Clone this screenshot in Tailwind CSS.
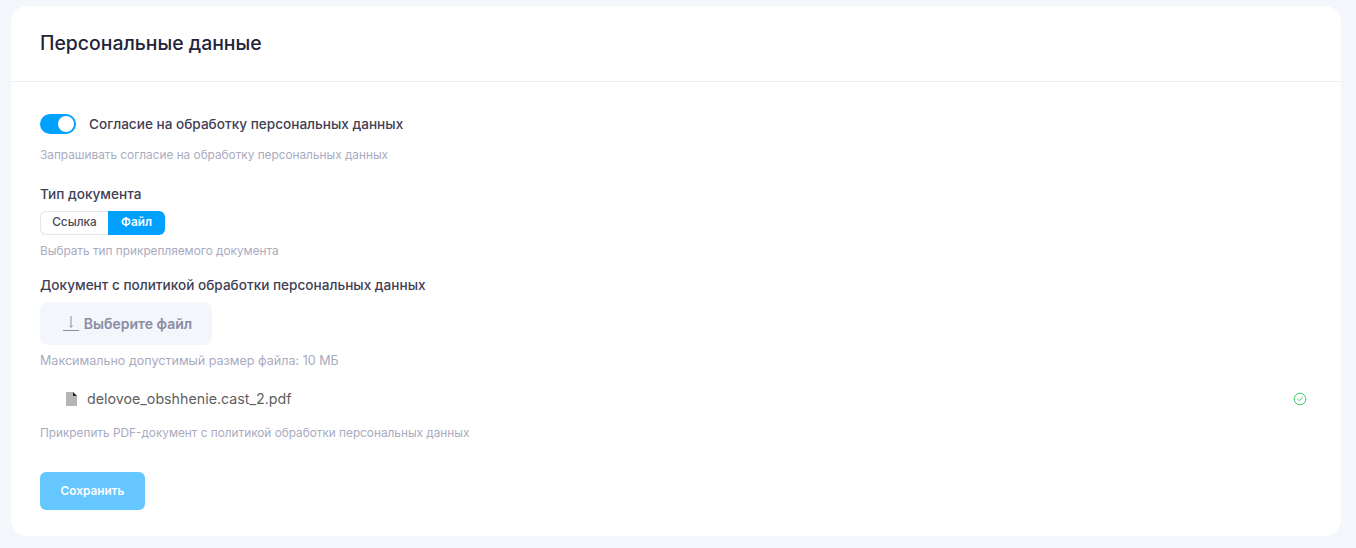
<!DOCTYPE html>
<html lang="ru">
<head>
    <meta charset="UTF-8">
    <title>Персональные данные</title>
    <script src="https://cdn.jsdelivr.net/npm/@tailwindcss/browser@4"></script>
</head>
<body class="bg-[#f3f6fa] font-['Inter',sans-serif] h-[548px] overflow-hidden">
    <div class="pt-[6px] pl-[11px] pr-[15px]">
        <div class="bg-white rounded-[16px] h-[530px]">
            <!-- Header -->
            <div class="h-[76px] border-b border-[#eceef2] pl-[29px] pt-[23px]">
                <h1 class="text-[19.4px] leading-[28px] font-medium text-[#23243a]">Персональные данные</h1>
            </div>
            <div class="pl-[29px] pr-[34px] pt-[32px]">
                <!-- Consent toggle -->
                <div class="flex items-center h-[20px]">
                    <div class="w-[36px] h-[20px] rounded-full bg-[#00a0ff] flex justify-end items-center pr-[2px]">
                        <div class="w-[16px] h-[16px] rounded-full bg-white"></div>
                    </div>
                    <span class="ml-[13px] text-[13.6px] font-medium text-[#3f4054]">Согласие на обработку персональных данных</span>
                </div>
                <p class="mt-[12px] text-[11.8px] leading-[18px] text-[#a9abc0]">Запрашивать согласие на обработку персональных данных</p>

                <!-- Document type -->
                <p class="mt-[20px] text-[13.6px] leading-[20px] font-medium text-[#3f4054]">Тип документа</p>
                <div class="mt-[7px] flex h-[24px] w-[125px] text-[11.8px] font-medium">
                    <div class="w-[68px] flex items-center justify-center border border-r-0 border-[#e4e6ec] rounded-l-[6px] text-[#4a4b5e]">Ссылка</div>
                    <div class="w-[57px] flex items-center justify-center bg-[#00a0ff] rounded-r-[6px] text-white font-semibold">Файл</div>
                </div>
                <p class="mt-[7px] text-[11.8px] leading-[18px] text-[#a9abc0]">Выбрать тип прикрепляемого документа</p>

                <!-- Policy document -->
                <p class="mt-[15px] text-[13.6px] leading-[20px] font-medium text-[#3f4054]">Документ с политикой обработки персональных данных</p>
                <div class="mt-[7px] w-[172px] h-[43px] pl-[3px] rounded-[8px] bg-[#f3f6fa] flex items-center justify-center gap-[5px] text-[14px] font-semibold text-[#8a8ca3]">
                    <svg class="mb-[1px]" width="16" height="16" viewBox="0 0 16 16" fill="none" stroke="#8a8ca3" stroke-width="1">
                        <path d="M0 15.5H16"/>
                        <path d="M8 1V12"/>
                        <path d="M6.5 10.5L8 12.5L9.5 10.5" stroke-width="0.8"/>
                    </svg>
                    <span>Выберите файл</span>
                </div>
                <p class="mt-[7px] text-[12.55px] leading-[18px] text-[#a9abc0]">Максимально допустимый размер файла: 10 МБ</p>

                <!-- Uploaded file -->
                <div class="mt-[17px] pl-[26px] flex items-center h-[24px]">
                    <svg width="12" height="14" viewBox="0 0 12 14">
                        <path d="M0 0H7L11 4V14H0Z" fill="#b5b5b5"/>
                        <path d="M7 0L11 4H7Z" fill="#222"/>
                    </svg>
                    <span class="ml-[9px] text-[14.25px] text-[#5f5f5f]">delovoe_obshhenie.cast_2.pdf</span>
                    <svg class="ml-auto mr-0" width="14" height="14" viewBox="0 0 14 14" fill="none" stroke="#3ccf6e" stroke-width="1">
                        <circle cx="7" cy="7" r="5.8"/>
                        <path d="M4.5 7L6.3 8.8L9.6 5.2"/>
                    </svg>
                </div>
                <p class="mt-[13px] text-[11.8px] leading-[18px] text-[#a9abc0]">Прикрепить PDF-документ с политикой обработки персональных данных</p>

                <!-- Save -->
                <button class="mt-[30px] w-[105px] h-[38px] pt-[1px] rounded-[6px] bg-[#66c6ff] text-white text-[11.8px] font-semibold">Сохранить</button>
            </div>
        </div>
    </div>
</body>
</html>
